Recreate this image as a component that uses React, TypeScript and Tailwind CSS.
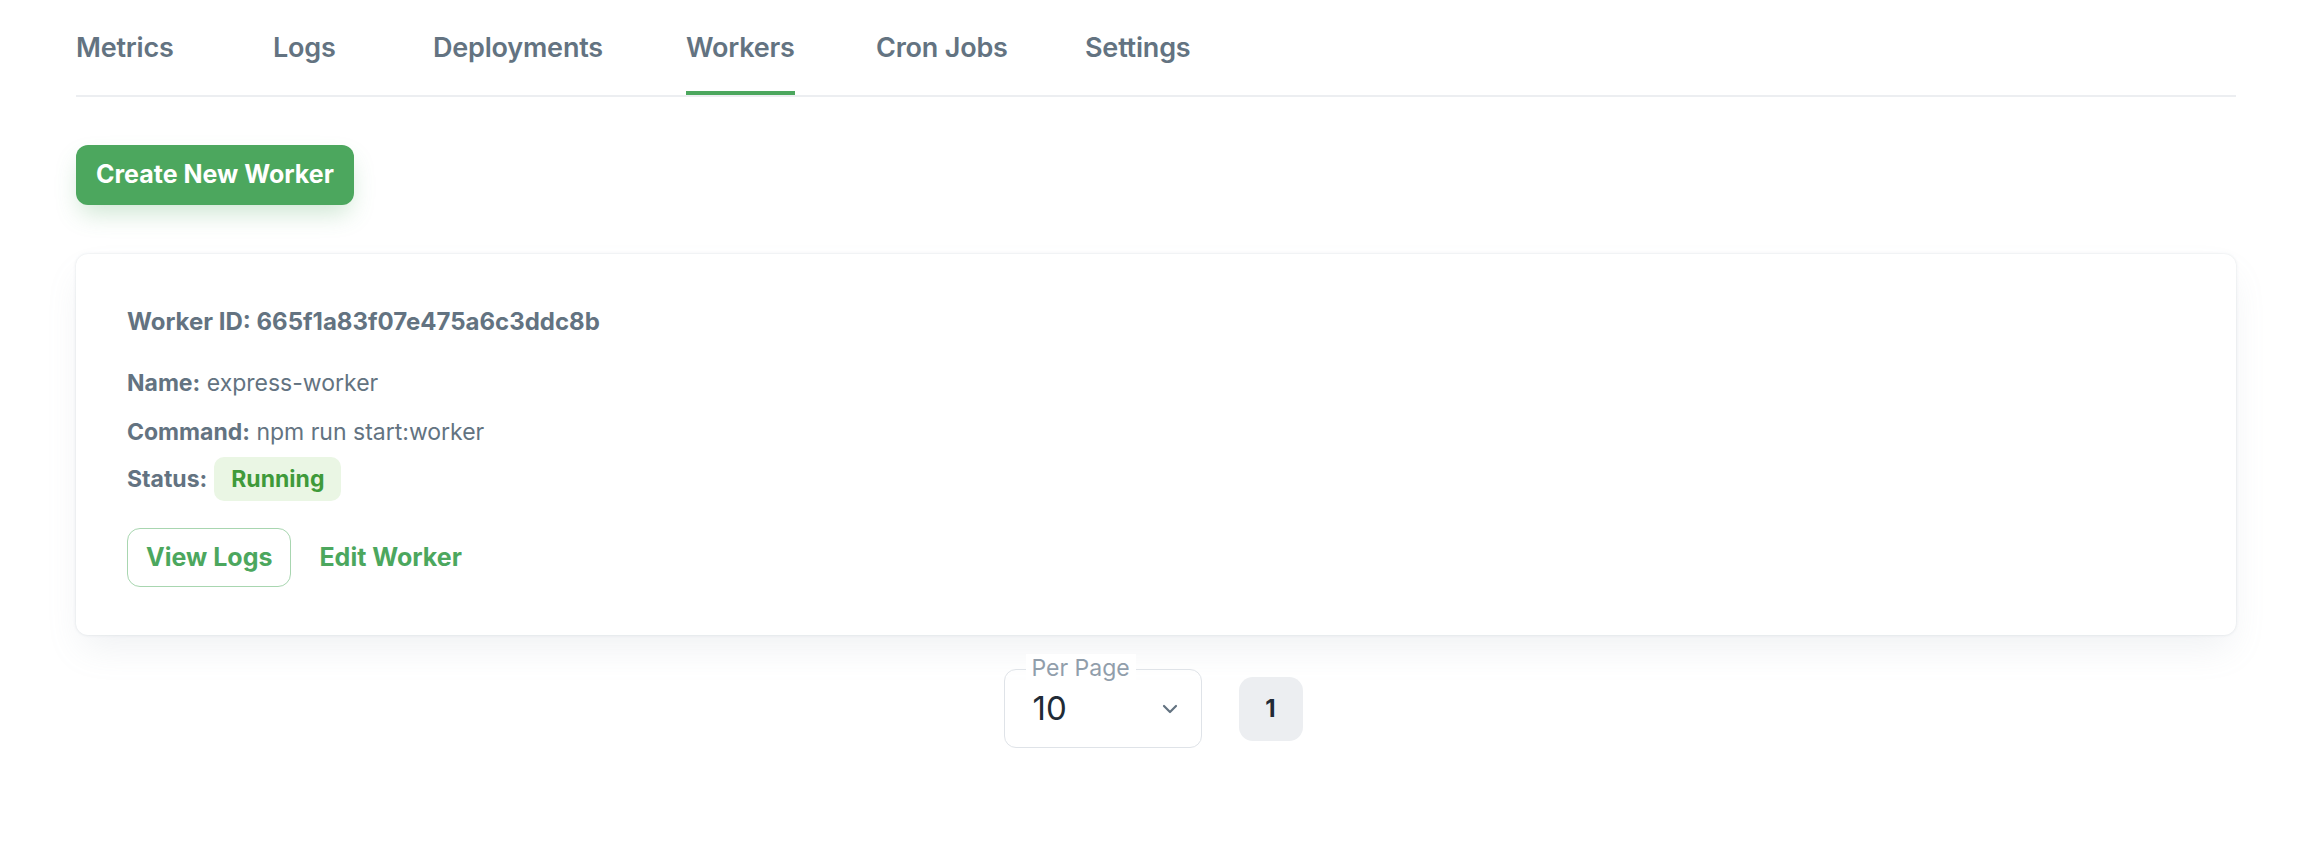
import { ChevronDown } from 'lucide-react'

const tabs = [
  { label: 'Metrics', width: 'w-[197px]' },
  { label: 'Logs', width: 'w-[160px]' },
  { label: 'Deployments', width: 'w-[253px]' },
  { label: 'Workers', width: 'w-[190px]', active: true },
  { label: 'Cron Jobs', width: 'w-[209px]' },
  { label: 'Settings', width: 'w-[200px]' },
]

function Tabs() {
  return (
    <div className="flex border-b-2 border-[#eceef1]">
      {tabs.map((tab) => (
        <div key={tab.label} className={`${tab.width} h-[95px] flex`}>
          <span className="relative h-full flex items-center pt-[2px] text-[27px] font-semibold text-[#637381] tracking-[-0.2px]">
            {tab.label}
            {tab.active && (
              <span className="absolute left-0 right-0 bottom-0 h-[4px] bg-[#4ca75e]" />
            )}
          </span>
        </div>
      ))}
    </div>
  )
}

function WorkerCard() {
  return (
    <div className="mt-[49px] rounded-[12px] bg-white shadow-[0_0_3px_0_rgba(145,158,171,0.3),0_18px_36px_-6px_rgba(145,158,171,0.14)] pl-[51px] pt-[51px] pb-[48px] text-[#637381] text-[23px]">
      <div className="leading-[34px] font-bold text-[24px]">
        Worker ID: 665f1a83f07e475a6c3ddc8b
      </div>
      <div className="mt-[27px] leading-[34px]">
        <span className="font-bold">Name:</span> express-worker
      </div>
      <div className="mt-[15px] leading-[34px]">
        <span className="font-bold">Command:</span> npm run start:worker
      </div>
      <div className="mt-[8px] flex items-center gap-[7px]">
        <span className="font-bold leading-[34px]">Status:</span>
        <span className="h-[44px] px-[17px] flex items-center rounded-[10px] bg-[#eaf6e4] text-[#3f9a3a] font-bold">
          Running
        </span>
      </div>
      <div className="mt-[27px] flex items-center gap-[8px]">
        <button className="h-[59px] px-[18px] rounded-[13px] border-[1.5px] border-[#a8d6b0] text-[#4ca75e] font-bold text-[25px]">
          View Logs
        </button>
        <button className="h-[59px] px-[20px] rounded-[13px] text-[#4ca75e] font-bold text-[25px]">
          Edit Worker
        </button>
      </div>
    </div>
  )
}

function Pagination() {
  return (
    <div className="mt-[34px] flex items-center justify-center gap-[37px]">
      <div className="relative w-[198px] h-[79px] rounded-[12px] border-[1.5px] border-[#dfe3e8] flex items-center justify-between pl-[28px] pr-[19px]">
        <span className="absolute -top-[16px] left-[21px] bg-white px-[6px] text-[23px] leading-[28px] text-[#919eab]">
          Per Page
        </span>
        <span className="text-[33px] text-[#212b36] leading-none">10</span>
        <ChevronDown className="w-[24px] h-[24px] text-[#637381]" strokeWidth={2.2} />
      </div>
      <button className="w-[64px] h-[64px] rounded-[14px] bg-[#eceef1] text-[24px] font-bold text-[#212b36]">
        1
      </button>
    </div>
  )
}

export default function App() {
  return (
    <div
      className="min-h-[842px] bg-white"
      style={{ fontFamily: 'Inter, "Noto Sans", sans-serif' }}
    >
      <div className="ml-[76px] w-[2160px]">
        <Tabs />
        <button className="mt-[48px] h-[60px] px-[20px] rounded-[12px] bg-[#4ca75e] text-white text-[25px] font-bold shadow-[0_12px_24px_-4px_rgba(76,167,94,0.28)]">
          Create New Worker
        </button>
        <WorkerCard />
      </div>
      <Pagination />
    </div>
  )
}
